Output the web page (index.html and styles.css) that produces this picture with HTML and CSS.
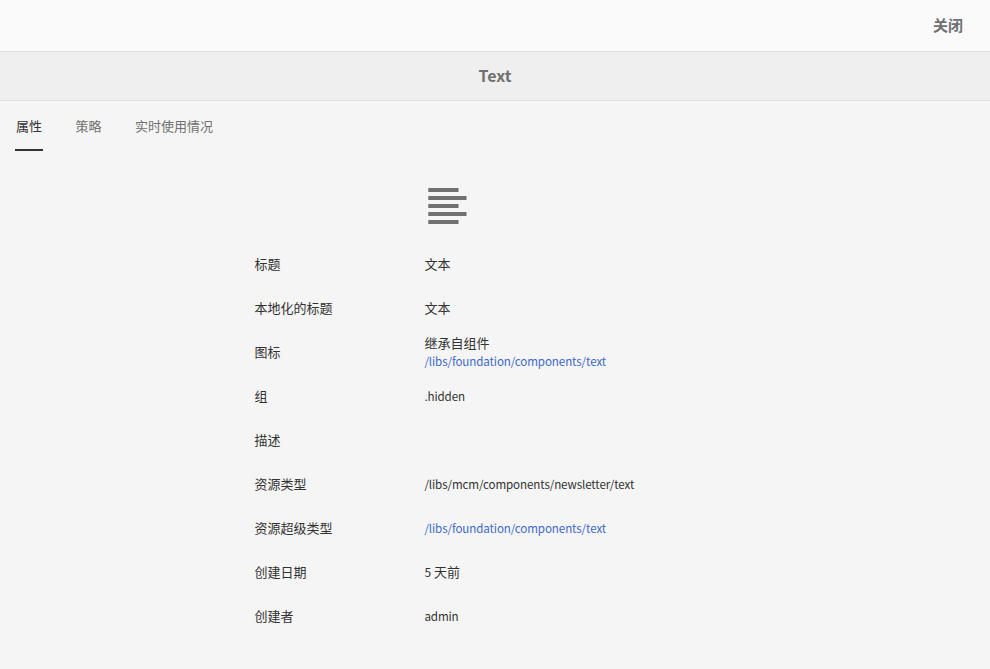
FILE: index.html
```html
<!DOCTYPE html>
<html lang="zh-CN">
<head>
<meta charset="utf-8">
<title>Text</title>
<link rel="stylesheet" href="styles.css">
</head>
<body>
<header class="shell"><button class="close">关闭</button></header>
<div class="titlebar"><h1>Text</h1></div>
<nav class="tabs">
<a class="tab active">属性</a><a class="tab">策略</a><a class="tab">实时使用情况</a>
</nav>
<main class="details">
<svg class="icon" width="40" height="37" viewBox="0 0 40 37" fill="#707070"><path d="M1.3 0h30.2v4H1.3zM1.3 8h38.2v4H1.3zM1.3 16h30.2v4H1.3zM1.3 24h38.2v4H1.3zM1.3 32h30.2v4H1.3z"/></svg>
<dl class="props">
<div class="row"><dt>标题</dt><dd>文本</dd></div>
<div class="row"><dt>本地化的标题</dt><dd>文本</dd></div>
<div class="row"><dt>图标</dt><dd>继承自组件<a class="path">/libs/foundation/components/text</a></dd></div>
<div class="row"><dt>组</dt><dd><span class="path">.hidden</span></dd></div>
<div class="row"><dt>描述</dt><dd></dd></div>
<div class="row"><dt>资源类型</dt><dd><span class="path">/libs/mcm/components/newsletter/text</span></dd></div>
<div class="row"><dt>资源超级类型</dt><dd><a class="path">/libs/foundation/components/text</a></dd></div>
<div class="row"><dt>创建日期</dt><dd><span class="count">5</span> 天前</dd></div>
<div class="row"><dt>创建者</dt><dd><span class="path">admin</span></dd></div>
</dl>
</main>
</body>
</html>
```
FILE: styles.css
```css
* { box-sizing: border-box; }
body { margin: 0; height: 669px; overflow: hidden; background: #f5f5f5; color: #323232; font: 13px/18px "Noto Sans CJK SC", sans-serif; }
.shell { height: 52px; display: flex; justify-content: flex-end; align-items: center; padding: 0 27px 2px 0; background: #fafafa; border-bottom: 1px solid #e1e1e1; }
.close { padding: 0; border: 0; background: none; color: #707070; font: bold 15px/20px "Noto Sans CJK SC", sans-serif; }
.titlebar { height: 49px; display: flex; justify-content: center; align-items: center; padding-bottom: 2px; background: #efefef; border-bottom: 1px solid #e1e1e1; }
h1 { margin: 0; color: #707070; font: bold 16px/20px "Noto Sans CJK SC", sans-serif; }
.tabs { height: 50px; display: flex; gap: 31.5px; padding-left: 15px; }
.tab { line-height: 47px; color: #707070; padding: 1px 1px 0; border-bottom: 2px solid transparent; }
.active { color: #323232; border-color: #323232; }
.icon { display: block; margin: 37px 0 17px 427px; }
.props { margin: 0 0 0 254.4px; }
.row { height: 44px; display: grid; grid-template-columns: 170px 1fr; align-items: center; }
dd { margin: 0; }
.path { display: block; font-size: 11.6px; letter-spacing: -0.11px; }
.count { font-size: 12px; }
a.path { color: #4069c8; }
```
